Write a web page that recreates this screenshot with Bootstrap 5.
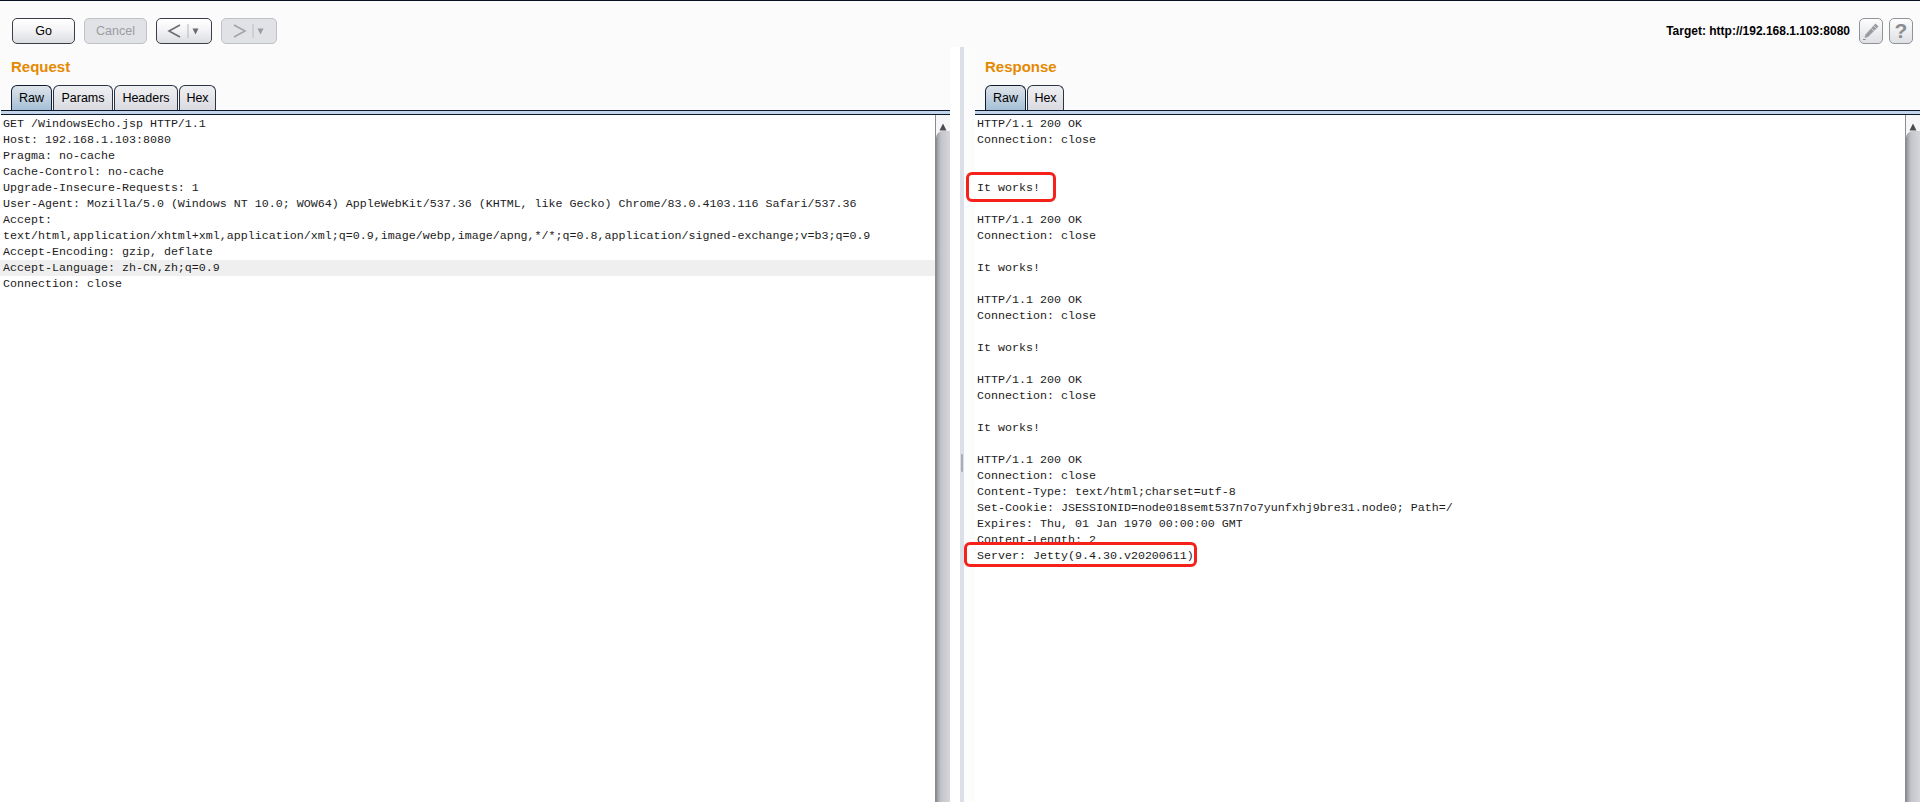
<!DOCTYPE html>
<html lang="en">
<head>
<meta charset="utf-8">
<title>Repeater</title>
<link href="https://cdn.jsdelivr.net/npm/bootstrap@5.3.0/dist/css/bootstrap.min.css" rel="stylesheet">
<style>
html,body{height:802px;overflow:hidden}
body{background:#fbfbfc;font-family:"Liberation Sans",Arial,sans-serif;color:#000;border-top:1px solid #0b1020}
.tool-bar{height:46px;padding:17px 7px 0 12px}
.bs{height:26px;padding:0;font-size:12.5px;line-height:24px;border-radius:5px;border:1px solid #3a3f47;color:#000;background:linear-gradient(#fff,#f4f4f6 45%,#dcdde2)}
.bs.off,.bs.off:disabled{border-color:#c0c2c8;color:#9a9ca2;background:#e1e2e6;opacity:1}
.wide-b{width:63px}
.hist-b{width:56px}
.icon-b{width:24px;border-color:#8f9298;background:linear-gradient(#fdfdfd,#dfe0e4)}
.q-mark{font-size:21px;font-weight:700;color:#8b8d92;line-height:24px}
.target-txt{font-size:12px;font-weight:700;margin-right:3px}
.gap-9{gap:9px}
.gap-6{gap:6px}
.pane-l{width:950px;flex:none}
.pane-r{flex:1 1 0;min-width:0}
.gutter{width:25px;flex:none;padding-left:10px;background:linear-gradient(90deg,#fff 0,#fff 10px,#fcfcfd 14px)}
.split-bar{width:4px;height:100%;background:#dcdfe7;padding-top:407px}
.split-grip{display:block;width:2px;margin-left:1px;height:18px;background:#a9acb4;border-radius:1px}
.pane-title{font-size:15px;font-weight:700;color:#e58900;line-height:18px;padding:11px 0 0 11px;height:38px}
.pane-r .pane-title{padding-left:10px}
.tab-row{height:25px;padding-left:11px;border:0;flex-wrap:nowrap;gap:1px}
.pane-r .tab-row{padding-left:10px}
.tab-row .nav-link{height:25px;padding:0;border:1px solid #2b3445;border-bottom:0;border-radius:6px 6px 0 0;font-size:12.5px;line-height:24px;color:#000;text-align:center;background:linear-gradient(#f0f0f3,#d9dae0);margin:0}
.tab-row .nav-link.active{background:linear-gradient(#dfe3ea,#a4bfd6);color:#000;border-color:#101c33}
.w-41{width:41px}.w-60{width:60px}.w-64{width:64px}.w-37{width:37px}
.dbl-rule{height:5px;margin-left:1px;background:#c3d4e8;border-top:1px solid #0c1730;border-bottom:1px solid #0c1730}
.pane-r .dbl-rule{margin-left:0}
.editor{height:687px;background:#fff;overflow:hidden}
.pane-r .editor{overflow:visible}
.code-text{flex:1 1 0;min-width:0;margin:0;padding:1px 0 0 3px;font-family:"Liberation Mono","Courier New",monospace;font-size:11.67px;line-height:16px;color:#1c1c1c;overflow:hidden;white-space:pre;position:relative;z-index:0}
.pane-r .code-text{padding-left:2px;overflow:visible}
.code-line{display:block;height:16px}
.code-hl{background:#efefef;margin-left:-3px;padding-left:3px}
.callout{position:relative;z-index:1;display:inline-block;height:16px}
.callout::before{content:"";position:absolute;border:3px solid #f5211b;border-radius:6px;background:#fff;z-index:-1}
.callout-a::before{top:-8px;bottom:-6px;left:-11px;right:-16px}
.callout-b::before{top:-6px;bottom:-3px;left:-13px;right:-3px}
.sbar{width:15px;flex:none;background:#f6f6f8;position:relative;z-index:1;border-left:1px solid #8a8c90}
.sbar-up{height:16px;display:block;text-align:center}
.sbar-thumb{height:671px;border-radius:7px 0 0 0;background:linear-gradient(90deg,#85878c 0,#a7a9ae 2px,#c3c5cb 5px,#d6d7dd 100%)}
</style>
</head>
<body class="d-flex flex-column">
<div class="tool-bar d-flex align-items-start gap-9">
  <button class="btn bs wide-b" type="button">Go</button>
  <button class="btn bs off wide-b" type="button" disabled>Cancel</button>
  <button class="btn bs hist-b d-flex align-items-center justify-content-center" type="button" aria-label="Back">
    <svg width="40" height="24" viewBox="0 0 40 24"><path d="M16 6 5 12l11 6" fill="none" stroke="#6a6d73" stroke-width="1.6"/><path d="M24 5v14" stroke="#b4b6bc"/><path d="M28.500 9.500h6l-3 6z" fill="#6a6d73"/></svg>
  </button>
  <button class="btn bs off hist-b d-flex align-items-center justify-content-center" type="button" disabled aria-label="Forward">
    <svg width="40" height="24" viewBox="0 0 40 24"><path d="M5 6l11 6-11 6" fill="none" stroke="#a2a4aa" stroke-width="1.600"/><path d="M24 5v14" stroke="#bcbec4"/><path d="M28.500 9.500h6l-3 6z" fill="#9a9ca2"/></svg>
  </button>
  <div class="ms-auto d-flex align-items-center gap-6">
    <span class="target-txt">Target: http://192.168.1.103:8080</span>
    <button class="btn bs icon-b d-flex align-items-center justify-content-center" type="button" aria-label="Edit target">
      <svg width="20" height="20" viewBox="0 0 20 20"><path d="M14.500 2.500 17.500 5.500 7 16 3.500 17 4.500 13.500z" fill="#9a9ca1"/><path d="M13 5 15.500 7.500M10.500 7.500l2.500 2.500" stroke="#d3d4d8"/><path d="M2 18.500h2.500" stroke="#8b8d92"/></svg>
    </button>
    <button class="btn bs icon-b q-mark" type="button">?</button>
  </div>
</div>
<main class="d-flex flex-grow-1">
  <section class="pane-l">
    <div class="pane-title">Request</div>
    <ul class="nav nav-tabs tab-row">
      <li class="nav-item"><a class="nav-link active w-41" href="#">Raw</a></li>
      <li class="nav-item"><a class="nav-link w-60" href="#">Params</a></li>
      <li class="nav-item"><a class="nav-link w-64" href="#">Headers</a></li>
      <li class="nav-item"><a class="nav-link w-37" href="#">Hex</a></li>
    </ul>
    <div class="dbl-rule"></div>
    <div class="editor d-flex">
<pre class="code-text"><span class="code-line">GET /WindowsEcho.jsp HTTP/1.1</span><span class="code-line">Host: 192.168.1.103:8080</span><span class="code-line">Pragma: no-cache</span><span class="code-line">Cache-Control: no-cache</span><span class="code-line">Upgrade-Insecure-Requests: 1</span><span class="code-line">User-Agent: Mozilla/5.0 (Windows NT 10.0; WOW64) AppleWebKit/537.36 (KHTML, like Gecko) Chrome/83.0.4103.116 Safari/537.36</span><span class="code-line">Accept:</span><span class="code-line">text/html,application/xhtml+xml,application/xml;q=0.9,image/webp,image/apng,*/*;q=0.8,application/signed-exchange;v=b3;q=0.9</span><span class="code-line">Accept-Encoding: gzip, deflate</span><span class="code-line code-hl">Accept-Language: zh-CN,zh;q=0.9</span><span class="code-line">Connection: close</span></pre>
      <div class="sbar">
        <span class="sbar-up"><svg width="14" height="16" viewBox="0 0 14 16"><path d="M3.500 10.500h7l-3.500-7z" fill="#4a4c50"/></svg></span>
        <div class="sbar-thumb"></div>
      </div>
    </div>
  </section>
  <div class="gutter"><div class="split-bar"><span class="split-grip"></span></div></div>
  <section class="pane-r">
    <div class="pane-title">Response</div>
    <ul class="nav nav-tabs tab-row">
      <li class="nav-item"><a class="nav-link active w-41" href="#">Raw</a></li>
      <li class="nav-item"><a class="nav-link w-37" href="#">Hex</a></li>
    </ul>
    <div class="dbl-rule"></div>
    <div class="editor d-flex">
<pre class="code-text"><span class="code-line">HTTP/1.1 200 OK</span><span class="code-line">Connection: close</span><span class="code-line"></span><span class="code-line"></span><span class="code-line"><span class="callout callout-a">It works!</span></span><span class="code-line"></span><span class="code-line">HTTP/1.1 200 OK</span><span class="code-line">Connection: close</span><span class="code-line"></span><span class="code-line">It works!</span><span class="code-line"></span><span class="code-line">HTTP/1.1 200 OK</span><span class="code-line">Connection: close</span><span class="code-line"></span><span class="code-line">It works!</span><span class="code-line"></span><span class="code-line">HTTP/1.1 200 OK</span><span class="code-line">Connection: close</span><span class="code-line"></span><span class="code-line">It works!</span><span class="code-line"></span><span class="code-line">HTTP/1.1 200 OK</span><span class="code-line">Connection: close</span><span class="code-line">Content-Type: text/html;charset=utf-8</span><span class="code-line">Set-Cookie: JSESSIONID=node018semt537n7o7yunfxhj9bre31.node0; Path=/</span><span class="code-line">Expires: Thu, 01 Jan 1970 00:00:00 GMT</span><span class="code-line">Content-Length: 2</span><span class="code-line"><span class="callout callout-b">Server: Jetty(9.4.30.v20200611)</span></span></pre>
      <div class="sbar">
        <span class="sbar-up"><svg width="14" height="16" viewBox="0 0 14 16"><path d="M3.500 10.500h7l-3.500-7z" fill="#4a4c50"/></svg></span>
        <div class="sbar-thumb"></div>
      </div>
    </div>
  </section>
</main>
<script src="https://cdn.jsdelivr.net/npm/bootstrap@5.3.0/dist/js/bootstrap.bundle.min.js"></script>
</body>
</html>
